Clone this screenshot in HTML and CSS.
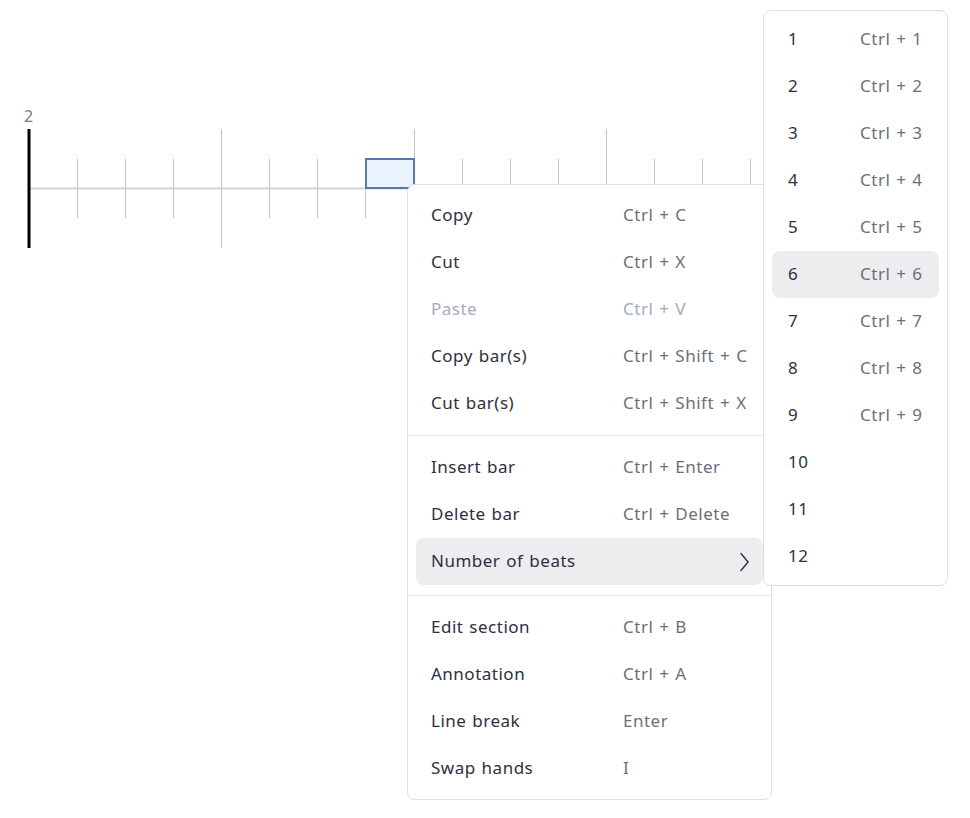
FILE: index.html
```html
<!DOCTYPE html>
<html>
<head>
<meta charset="utf-8">
<link rel="stylesheet" href="styles.css">
</head>
<body>
<div class="page">
  <svg class="staff" width="970" height="260" viewBox="0 0 970 260">
    <text x="24" y="122" class="bar-num">2</text>
    <line x1="29" y1="188.5" x2="800" y2="188.5" class="hline"/>
    <g class="tick">
      <line x1="77.5" y1="159" x2="77.5" y2="218"/>
      <line x1="125.5" y1="159" x2="125.5" y2="218"/>
      <line x1="173.5" y1="159" x2="173.5" y2="218"/>
      <line x1="221.5" y1="129" x2="221.5" y2="248"/>
      <line x1="269.5" y1="159" x2="269.5" y2="218"/>
      <line x1="317.5" y1="159" x2="317.5" y2="218"/>
      <line x1="365.5" y1="159" x2="365.5" y2="218"/>
      <line x1="414.5" y1="129" x2="414.5" y2="248"/>
      <line x1="462.5" y1="159" x2="462.5" y2="218"/>
      <line x1="510.5" y1="159" x2="510.5" y2="218"/>
      <line x1="558.5" y1="159" x2="558.5" y2="218"/>
      <line x1="606.5" y1="129" x2="606.5" y2="248"/>
      <line x1="654.5" y1="159" x2="654.5" y2="218"/>
      <line x1="702.5" y1="159" x2="702.5" y2="218"/>
      <line x1="750.5" y1="159" x2="750.5" y2="218"/>
    </g>
    <rect x="366" y="159" width="48" height="29" class="sel"/>
    <line x1="29" y1="129" x2="29" y2="248" class="barline"/>
  </svg>

  <div class="menu main-menu">
    <div class="group">
      <div class="item"><span class="label">Copy</span><span class="key">Ctrl + C</span></div>
      <div class="item"><span class="label">Cut</span><span class="key">Ctrl + X</span></div>
      <div class="item disabled"><span class="label">Paste</span><span class="key">Ctrl + V</span></div>
      <div class="item"><span class="label">Copy bar(s)</span><span class="key">Ctrl + Shift + C</span></div>
      <div class="item"><span class="label">Cut bar(s)</span><span class="key">Ctrl + Shift + X</span></div>
    </div>
    <div class="group g2">
      <div class="item"><span class="label">Insert bar</span><span class="key">Ctrl + Enter</span></div>
      <div class="item"><span class="label">Delete bar</span><span class="key">Ctrl + Delete</span></div>
      <div class="item active"><span class="label">Number of beats</span><span class="key"></span>
        <svg class="chev" width="12" height="20" viewBox="0 0 12 20"><path d="M3 1.5 L10 10 L3 18.5" fill="none" stroke="#2f3342" stroke-width="1.4" stroke-linecap="round" stroke-linejoin="round"/></svg>
      </div>
    </div>
    <div class="group">
      <div class="item"><span class="label">Edit section</span><span class="key">Ctrl + B</span></div>
      <div class="item"><span class="label">Annotation</span><span class="key">Ctrl + A</span></div>
      <div class="item"><span class="label">Line break</span><span class="key">Enter</span></div>
      <div class="item"><span class="label">Swap hands</span><span class="key">I</span></div>
    </div>
  </div>

  <div class="menu sub-menu">
    <div class="sitem"><span class="num">1</span><span class="key">Ctrl + 1</span></div>
    <div class="sitem"><span class="num">2</span><span class="key">Ctrl + 2</span></div>
    <div class="sitem"><span class="num">3</span><span class="key">Ctrl + 3</span></div>
    <div class="sitem"><span class="num">4</span><span class="key">Ctrl + 4</span></div>
    <div class="sitem"><span class="num">5</span><span class="key">Ctrl + 5</span></div>
    <div class="sitem active"><span class="num">6</span><span class="key">Ctrl + 6</span></div>
    <div class="sitem"><span class="num">7</span><span class="key">Ctrl + 7</span></div>
    <div class="sitem"><span class="num">8</span><span class="key">Ctrl + 8</span></div>
    <div class="sitem"><span class="num">9</span><span class="key">Ctrl + 9</span></div>
    <div class="sitem"><span class="num">10</span><span class="key"></span></div>
    <div class="sitem"><span class="num">11</span><span class="key"></span></div>
    <div class="sitem"><span class="num">12</span><span class="key"></span></div>
  </div>
</div>
</body>
</html>
```

FILE: styles.css
```css
html, body {
  margin: 0;
  padding: 0;
  background: #ffffff;
}
body {
  font-family: "Noto Sans", "Open Sans", sans-serif;
  color: #2c3040;
}
.page {
  position: relative;
  width: 970px;
  height: 818px;
  overflow: hidden;
}
.staff {
  display: block;
}
.bar-num {
  font-family: "Noto Sans", sans-serif;
  font-size: 16px;
  fill: #7a7a7a;
}
.hline {
  stroke: #d4d4d4;
  stroke-width: 2;
}
.tick line {
  stroke: #c4c4c4;
  stroke-width: 1;
}
.sel {
  fill: #eaf4fe;
  stroke: #5a77ac;
  stroke-width: 2;
}
.barline {
  stroke: #000;
  stroke-width: 3;
}
.menu {
  position: absolute;
  background: #fff;
  border: 1px solid #dedfe3;
  border-radius: 8px;
  box-sizing: border-box;
}
.main-menu {
  left: 407px;
  top: 184px;
  width: 365px;
}
.group {
  padding: 8px 8px;
}
.group:first-child {
  padding-top: 7px;
}
.group + .group {
  border-top: 1px solid #e4e5e8;
}
.group.g2 {
  padding-bottom: 10px;
}
.group:last-child {
  padding-bottom: 7px;
}
.item {
  height: 47px;
  box-sizing: border-box;
  display: grid;
  grid-template-columns: 192px 1fr auto;
  align-items: center;
  padding: 0 15px 2px;
  border-radius: 8px;
  font-size: 17px;
  letter-spacing: 0.5px;
  word-spacing: 1px;
}
.item .label {
  color: #2c3040;
}
.key {
  color: #6c6f79;
}
.item.disabled .label,
.item.disabled .key {
  color: #a4abb9;
}
.item.active,
.sitem.active {
  background: #ededf0;
}
.chev {
  display: block;
  margin-right: -2px;
  margin-top: 2px;
}
.sub-menu {
  left: 763px;
  top: 10px;
  width: 185px;
  height: 576px;
  padding: 5px 8px;
}
.sitem {
  height: 47px;
  box-sizing: border-box;
  display: grid;
  grid-template-columns: 72px 1fr;
  align-items: center;
  padding: 0 16px 2px;
  border-radius: 8px;
  font-size: 17px;
  letter-spacing: 0.5px;
  word-spacing: 1px;
}
.sitem .num {
  color: #2c3040;
}
```
